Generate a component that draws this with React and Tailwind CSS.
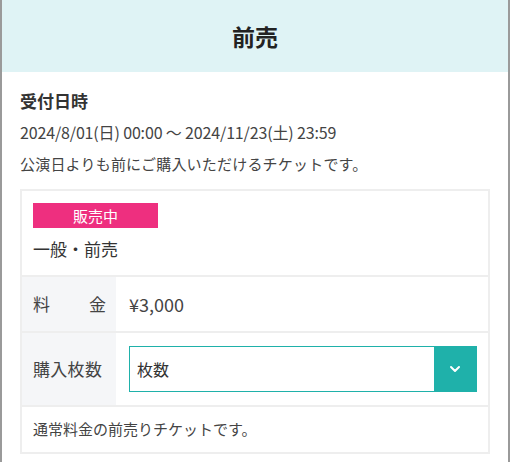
export default function App() {
  const font = { fontFamily: '"Noto Sans CJK JP", "Noto Sans", sans-serif' };
  return (
    <div className="w-[510px] h-[462px] overflow-hidden bg-white border-x-2 border-[#9a9a9a] text-[#333]" style={font}>
      <div className="h-[72px] bg-[#dff3f5] flex items-center justify-center">
        <h1 className="text-[23px] font-bold text-[#222] leading-none">前売</h1>
      </div>
      <div className="px-[18px]">
        <div className="pt-[18px] text-[17px] font-bold text-[#333] leading-[22px]">受付日時</div>
        <div className="mt-[9px] text-[16px] tracking-[-0.15px] leading-[22px] text-[#444]">2024/8/01(日) 00:00 ～ 2024/11/23(土) 23:59</div>
        <div className="mt-[10px] text-[15px] tracking-[0.2px] leading-[22px] text-[#444]">公演日よりも前にご購入いただけるチケットです。</div>
        <div className="mt-[14px] border-2 border-[#eeeeee]">
          <div className="h-[86px] px-[11px] pt-[12px] border-b-2 border-[#eeeeee]">
            <div className="w-[125px] h-[25px] bg-[#ee2f7f] text-white text-[15px] leading-[25px] text-center">販売中</div>
            <div className="mt-[9px] text-[17px] leading-[24px] text-[#333]">一般・前売</div>
          </div>
          <div className="flex h-[56px] border-b-2 border-[#eeeeee]">
            <div className="w-[94px] bg-[#f5f6f8] flex items-center justify-between pl-[11px] pr-[10px] text-[17px] text-[#444]">
              <span>料</span><span>金</span>
            </div>
            <div className="flex items-center pl-[13px] text-[18px] text-[#444]">¥3,000</div>
          </div>
          <div className="flex h-[74px] border-b-2 border-[#eeeeee]">
            <div className="w-[94px] bg-[#f5f6f8] flex items-center pl-[11px] text-[17px] tracking-[0.3px] text-[#444]">購入枚数</div>
            <div className="flex-1 flex items-center pl-[13px] pr-[11px]">
              <div className="flex-1 h-[46px] border border-[#1fb1aa] flex items-stretch">
                <div className="flex-1 flex items-center pl-[7px] text-[16px] text-[#333]">枚数</div>
                <div className="w-[42px] bg-[#1fb1aa] flex items-center justify-center">
                  <svg width="12" height="8" viewBox="0 0 12 8" fill="none">
                    <path d="M2 2l4 4 4-4" stroke="white" strokeWidth="2" strokeLinecap="round" strokeLinejoin="round" />
                  </svg>
                </div>
              </div>
            </div>
          </div>
          <div className="h-[45px] flex items-center pl-[11px] text-[15px] text-[#444]">通常料金の前売りチケットです。</div>
        </div>
      </div>
    </div>
  );
}
